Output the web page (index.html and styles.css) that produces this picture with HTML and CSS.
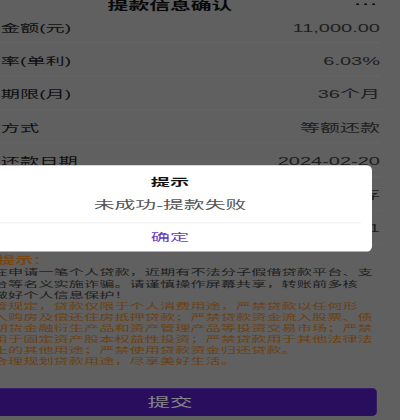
FILE: index.html
```html
<!DOCTYPE html>
<html lang="zh-CN">
<head>
<meta charset="utf-8">
<title>提款信息确认</title>
<link rel="stylesheet" href="styles.css">
</head>
<body>
<div class="viewport">
  <div class="screen">
    <header class="nav">
      <div></div>
      <div class="nav-title">提款信息确认</div>
      <div class="nav-more"><i></i><i></i><i></i></div>
    </header>
    <div class="rows">
      <div class="row"><span class="label">提款金额(元)</span><span class="value">11,000.00</span></div>
      <div class="row"><span class="label">年利率(单利)</span><span class="value">6.03%</span></div>
      <div class="row"><span class="label">提款期限(月)</span><span class="value">36个月</span></div>
      <div class="row"><span class="label">还款方式</span><span class="value">等额还款</span></div>
      <div class="row"><span class="label">首期还款日期</span><span class="value">2024-02-20</span></div>
      <div class="row"><span class="label">账户类型</span><span class="value">活期储蓄存</span></div>
      <div class="row"><span class="label">收款账号</span><span class="value">6217****0001</span></div>
    </div>
    <div class="tips">
      <div class="tips-title">温馨提示：</div>
      <p class="tips-text"><span>您正在申请一笔个人贷款，近期有不法分子假借贷款平台、支</span><span>付平台等名义实施诈骗。请谨慎操作屏幕共享，转账前多核</span><span>实，做好个人信息保护！</span></p>
      <p class="tips-warn"><span>按监管规定，贷款仅限于个人消费用途，严禁贷款以任何形</span><span>式流入购房及偿还住房抵押贷款；严禁贷款资金流入股票、债</span><span>券、期货金融衍生产品和资产管理产品等投资交易市场；严禁</span><span>贷款用于固定资产股本权益性投资；严禁贷款用于其他法律法</span><span>规禁止的其他用途；严禁使用贷款资金归还贷款。</span><span>请您合理规划贷款用途，尽享美好生活。</span></p>
    </div>
    <div class="footer">
      <button class="submit" type="button">提交</button>
    </div>
    <div class="mask"></div>
    <div class="dialog">
      <div class="dialog-title">提示</div>
      <div class="dialog-msg">未成功-提款失败</div>
      <div class="dialog-line"></div>
      <div class="dialog-btn">确定</div>
    </div>
  </div>
</div>
</body>
</html>
```
FILE: styles.css
```css
html, body {
  margin: 0;
  padding: 0;
}
body {
  width: 400px;
  height: 420px;
  overflow: hidden;
  background: #616161;
  font-family: "Liberation Sans", "Noto Sans CJK SC", sans-serif;
}
.viewport {
  width: 400px;
  height: 420px;
  overflow: hidden;
  position: relative;
}
.screen {
  position: relative;
  width: 287.5px;
  min-height: 560px;
  background: #b0b0b0;
  transform: translate(-60px, -25.7px) scale(1.6, 0.88);
  transform-origin: 0 0;
}
.nav {
  height: 40px;
  display: grid;
  grid-template-columns: 1fr auto 1fr;
  align-items: end;
}
.nav-title {
  font-size: 13px;
  font-weight: bold;
  line-height: 8px;
  color: #111;
}
.nav-more {
  justify-self: end;
  display: flex;
  gap: 3.2px;
  margin: 0 15.5px 5.3px 0;
}
.nav-more i {
  display: block;
  width: 2px;
  height: 1.6px;
  border-radius: 1px;
  background: #222;
}
.row {
  display: flex;
  justify-content: space-between;
  align-items: center;
  margin: 0 12.5px 0 14px;
  padding: 12.5px 0 8.6px;
  border-bottom: 1px solid #b9b9b9;
  line-height: 16px;
}
.label {
  font-size: 12px;
  color: #1c1c1c;
}
.value {
  font-size: 12.5px;
  color: #3a3a3a;
}
.tips {
  margin: 11px 12.5px 0 14px;
}
.tips-title {
  font-size: 11px;
  font-weight: bold;
  line-height: 14px;
  color: #d9801f;
  margin-bottom: 1.8px;
}
.tips-text, .tips-warn {
  margin: 0;
  font-size: 9.5px;
  line-height: 12.56px;
}
.tips-text span, .tips-warn span {
  display: block;
  white-space: nowrap;
}
.tips-text {
  color: #3a3a3a;
}
.tips-warn {
  color: #c4741f;
}
.footer {
  margin: 23.4px 14.5px 0;
}
.submit {
  display: block;
  width: 100%;
  height: 32px;
  border: 0;
  border-top: 1px solid #6a3ad0;
  border-radius: 3px / 5px;
  background: #4a1aa8;
  color: #f4f0fa;
  font-family: "Liberation Sans", "Noto Sans CJK SC", sans-serif;
  font-size: 14px;
  padding: 0;
}
.mask {
  position: absolute;
  inset: 0;
  background: rgba(0, 0, 0, 0.45);
}
.dialog {
  position: absolute;
  top: 216.7px;
  left: 17.5px;
  width: 252.5px;
  background: #ffffff;
  border-radius: 3px / 6px;
  padding-top: 11.5px;
  text-align: center;
}
.dialog-title {
  font-size: 12px;
  font-weight: bold;
  line-height: 18px;
  color: #111;
}
.dialog-msg {
  margin-top: 8px;
  font-size: 13px;
  line-height: 18px;
  color: #555;
}
.dialog-line {
  margin: 9.4px 7.5px 0;
  border-top: 1px solid #ececec;
}
.dialog-btn {
  height: 32.8px;
  line-height: 32.8px;
  font-size: 12px;
  color: #6a3cbc;
}
```
